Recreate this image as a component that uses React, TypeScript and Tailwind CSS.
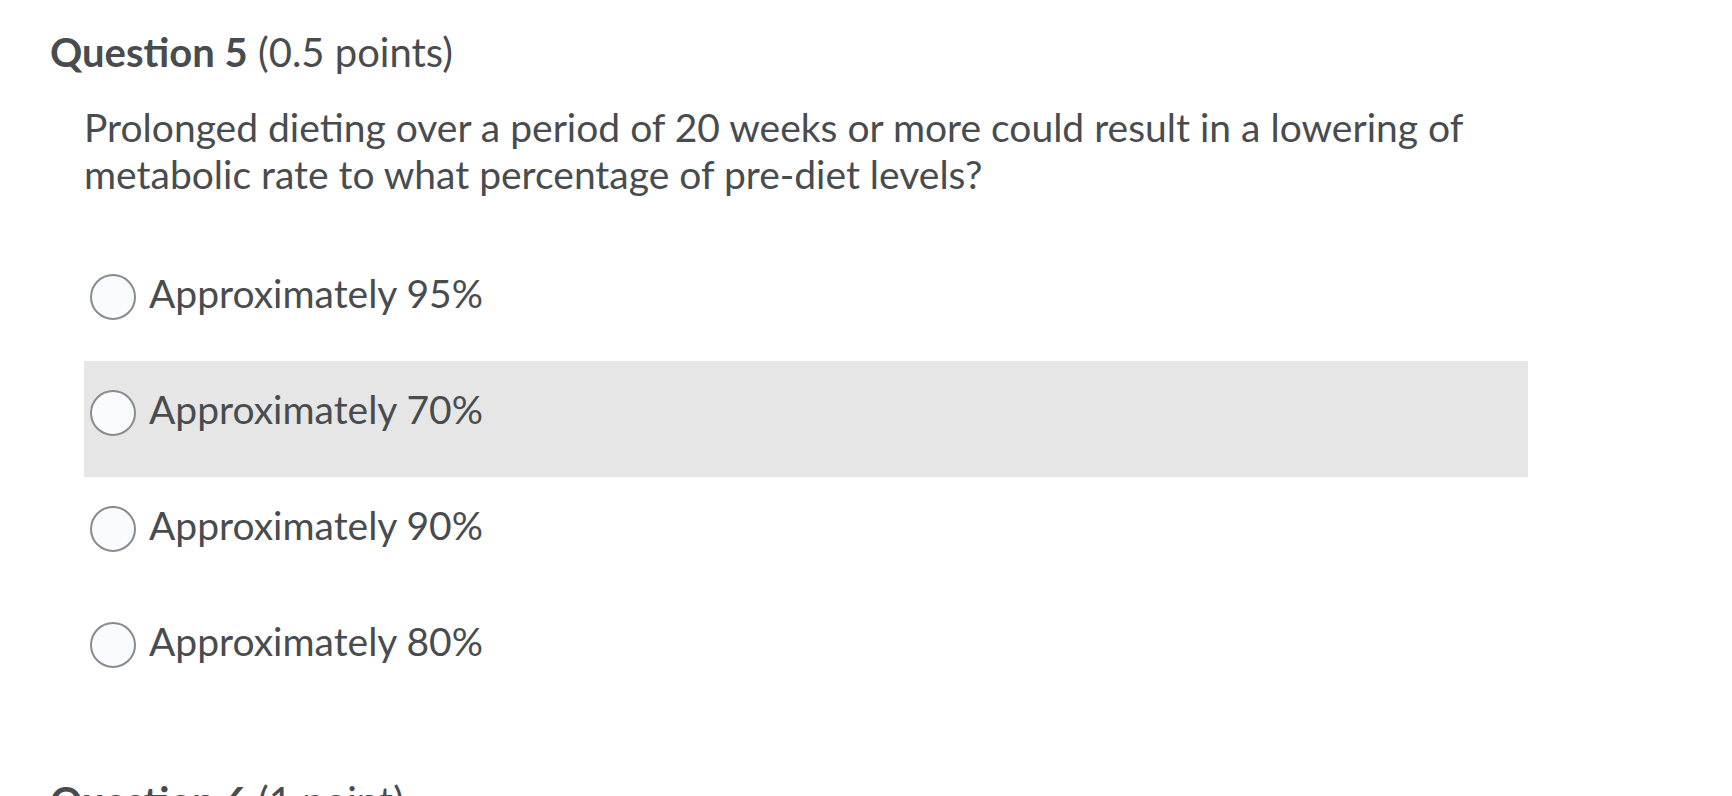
import React from "react";

const options = ["Approximately 95%", "Approximately 70%", "Approximately 90%", "Approximately 80%"];

export default function App() {
  return (
    <div
      className="w-[1732px] h-[796px] overflow-hidden bg-white text-[#494c4e]"
      style={{ fontFamily: "Lato, 'Noto Sans', sans-serif" }}
    >
      <div className="pl-[50px] pt-[28px]">
        <h2 className="text-[40px] leading-[48px] m-0">
          <span className="font-bold">Question 5</span>
          <span className="font-normal"> (0.5 points)</span>
        </h2>
        <div className="ml-[34px] mt-[28px] w-[1444px]">
          <p className="text-[39px] leading-[47px] m-0">
            Prolonged dieting over a period of 20 weeks or more could result in a lowering of
            <br />
            metabolic rate to what percentage of pre-diet levels?
          </p>
          <div className="mt-[47px] flex flex-col">
            {options.map((o, i) => (
              <label
                key={o}
                className={`flex items-start h-[116px] pt-[25px] pl-[6px] ${i === 1 ? "bg-[#e6e6e6]" : ""}`}
              >
                <span className="mt-[4px] w-[46px] h-[46px] shrink-0 rounded-full border-2 border-[#898b8d] bg-[#f9fbff]" />
                <span className="ml-[13px] text-[39px] leading-[46px]">{o}</span>
              </label>
            ))}
          </div>
        </div>
        <h2 className="mt-[68px] text-[40px] leading-[48px] m-0">
          <span className="font-bold">Question 6</span>
          <span className="font-normal"> (1 point)</span>
        </h2>
      </div>
    </div>
  );
}
